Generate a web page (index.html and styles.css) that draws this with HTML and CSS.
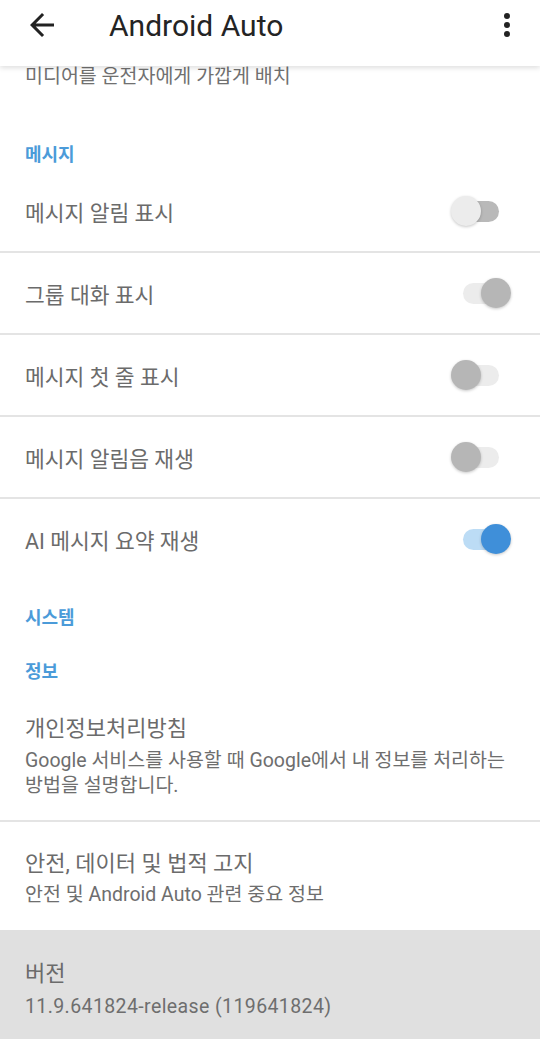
FILE: index.html
```html
<html>
	<head>
		<meta charset="utf-8">
		<title>Android Auto</title>
		<link rel="stylesheet" href="styles.css">
	</head>
	<body>
		<div class="appbar">
			<div class="toolbar">
				<svg class="icon" viewBox="0 0 24 24"><path d="M20 11H7.83l5.59-5.59L12 4l-8 8 8 8 1.41-1.41L7.83 13H20v-2z"/></svg>
				<div class="title">Android Auto</div>
				<svg class="icon menu" viewBox="0 0 24 24"><circle cx="12" cy="6" r="2"/><circle cx="12" cy="12" r="2"/><circle cx="12" cy="18" r="2"/></svg>
			</div>
		</div>

		<div class="note">미디어를 운전자에게 가깝게 배치</div>

		<div class="section first">메시지</div>
		<div class="row">
			<div class="label">메시지 알림 표시</div>
			<div class="switch light"><div class="track"></div><div class="thumb"></div></div>
		</div>
		<div class="row">
			<div class="label">그룹 대화 표시</div>
			<div class="switch grey on"><div class="track"></div><div class="thumb"></div></div>
		</div>
		<div class="row">
			<div class="label">메시지 첫 줄 표시</div>
			<div class="switch grey"><div class="track"></div><div class="thumb"></div></div>
		</div>
		<div class="row">
			<div class="label">메시지 알림음 재생</div>
			<div class="switch grey"><div class="track"></div><div class="thumb"></div></div>
		</div>
		<div class="row last">
			<div class="label">AI 메시지 요약 재생</div>
			<div class="switch blue on"><div class="track"></div><div class="thumb"></div></div>
		</div>

		<div class="section sys">시스템</div>
		<div class="section info">정보</div>

		<div class="item privacy">
			<div class="item-title">개인정보처리방침</div>
			<div class="item-sub">Google 서비스를 사용할 때 Google에서 내 정보를 처리하는 방법을 설명합니다.</div>
		</div>
		<div class="item safety">
			<div class="item-title">안전, 데이터 및 법적 고지</div>
			<div class="item-sub">안전 및 Android Auto 관련 중요 정보</div>
		</div>
		<div class="item version">
			<div class="item-title">버전</div>
			<div class="item-sub latin">11.9.641824-release (119641824)</div>
		</div>
	</body>
</html>
```

FILE: styles.css
```css
body {
	margin: 0;
	background-color: white;
	font-family: Roboto, "Noto Sans CJK KR", sans-serif;
	color: #6b6b6b;
}

.appbar {
	height: 66px;
	background-color: white;
	box-shadow: 0 2px 5px rgba(0, 0, 0, 0.13);
	position: relative;
	z-index: 1;
}

.toolbar {
	height: 50px;
	display: flex;
	align-items: center;
	padding: 0 15px 0 24px;
}

.icon {
	width: 36px;
	height: 36px;
	fill: #222222;
	flex: none;
}

.title {
	flex: 1;
	margin-left: 49px;
	font-size: 30px;
	color: #242424;
}

.note {
	height: 22px;
	line-height: 22px;
	padding-left: 25px;
	font-size: 19.5px;
	color: #707070;
}

.section {
	padding-left: 25px;
	font-size: 18px;
	line-height: 24px;
	font-weight: bold;
	color: #4b9bd9;
}

.section.first {
	padding-top: 55px;
	padding-bottom: 4px;
}

.section.sys {
	padding-top: 27px;
}

.section.info {
	padding-top: 30px;
}

.row {
	height: 80px;
	display: flex;
	align-items: center;
	justify-content: space-between;
	padding: 0 29px 0 25px;
	border-bottom: 2px solid #e4e4e4;
}

.row.last {
	border-bottom: none;
}

.label {
	font-size: 21.5px;
}

.switch {
	width: 60px;
	height: 30px;
	position: relative;
}

.track {
	margin: 4.5px 0 0 12px;
	width: 36px;
	height: 21px;
	border-radius: 11px;
}

.thumb {
	position: absolute;
	top: 0;
	left: 0;
	width: 30px;
	height: 30px;
	border-radius: 50%;
	box-shadow: 0 1px 3px rgba(0, 0, 0, 0.22);
}

.switch.on .thumb {
	left: 30px;
}

.light .track { background-color: #b9b9b9; }
.light .thumb { background-color: #ececec; }
.grey .track { background-color: #ececec; }
.grey .thumb { background-color: #b6b6b6; }
.blue .track { background-color: #bcdcf5; }
.blue .thumb { background-color: #3f8fd9; }

.item {
	padding-left: 25px;
	padding-right: 25px;
}

.item-title {
	font-size: 22px;
	line-height: 28px;
}

.item-sub {
	font-size: 19.5px;
	line-height: 25px;
	color: #6e6e6e;
}

.item-sub.latin {
	letter-spacing: 0.4px;
}

.privacy {
	padding-top: 31px;
	padding-bottom: 22px;
	border-bottom: 2px solid #e4e4e4;
}

.privacy .item-sub {
	margin-top: 5px;
}

.safety {
	padding-top: 28px;
	padding-bottom: 23px;
}

.safety .item-sub {
	margin-top: 4px;
}

.version {
	background-color: #e0e0e0;
	padding-top: 30px;
	padding-bottom: 20px;
}

.version .item-sub {
	margin-top: 6px;
}
```
